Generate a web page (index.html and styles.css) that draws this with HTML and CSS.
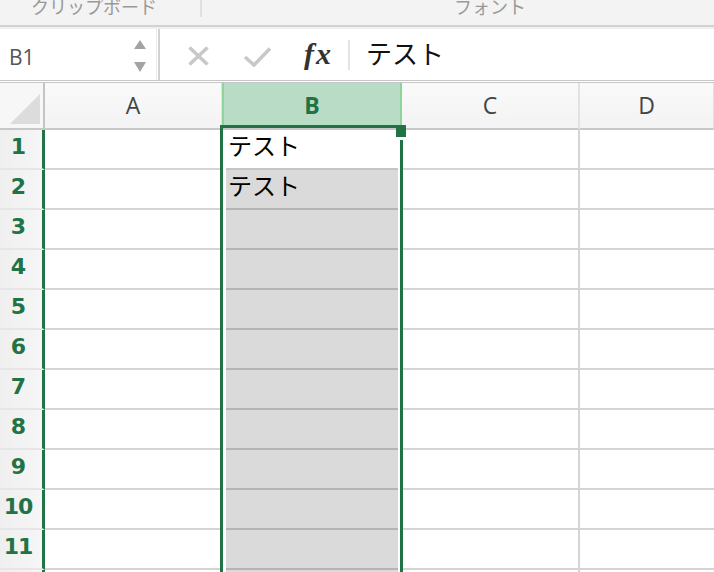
FILE: index.html
```html
<!DOCTYPE html>
<html lang="ja">
<head>
<meta charset="utf-8">
<title>Sheet</title>
<link rel="stylesheet" href="styles.css">
</head>
<body>
<div class="app">
  <div class="ribbon">
    <div class="rgroup g1"><span class="rlabel">クリップボード</span></div>
    <div class="rgroup g2"><span class="rlabel">フォント</span></div>
  </div>
  <div class="fbar">
    <div class="namebox">
      <span class="nbtext">B1</span>
      <svg class="spin" width="12" height="32" viewBox="0 0 12 32"><polygon points="6,0 12,9 0,9" fill="#a3a3a3"/><polygon points="0,22 12,22 6,32" fill="#a3a3a3"/></svg>
    </div>
    <div class="vsep"></div>
    <svg class="ico-x" width="23" height="22" viewBox="0 0 23 22"><path d="M2.5 2.5 L20.5 19.5 M20.5 2.5 L2.5 19.5" stroke="#c8c8c8" stroke-width="3.6" fill="none"/></svg>
    <svg class="ico-ok" width="29" height="21" viewBox="0 0 29 21"><path d="M2 11 L11 19 L27 2.5" stroke="#c8c8c8" stroke-width="3.6" fill="none" stroke-linejoin="miter"/></svg>
    <span class="fx">fx</span>
    <div class="fsep"></div>
    <span class="ftext">テスト</span>
  </div>
  <div class="sheet">
    <div class="corner"><svg width="45" height="45" viewBox="0 0 45 45"><polygon points="40,11 40,41 10,41" fill="#dcdcdc"/></svg></div>
    <div class="ch">A</div>
    <div class="ch sel">B</div>
    <div class="ch cc">C</div>
    <div class="ch">D</div>

    <div class="rh">1</div><div class="cell"></div><div class="cell b"><div class="bf active"><span class="txt">テスト</span></div></div><div class="cell c"></div><div class="cell"></div>
    <div class="rh">2</div><div class="cell"></div><div class="cell b"><div class="bf"><span class="txt">テスト</span></div></div><div class="cell c"></div><div class="cell"></div>
    <div class="rh">3</div><div class="cell"></div><div class="cell b"><div class="bf"></div></div><div class="cell c"></div><div class="cell"></div>
    <div class="rh">4</div><div class="cell"></div><div class="cell b"><div class="bf"></div></div><div class="cell c"></div><div class="cell"></div>
    <div class="rh">5</div><div class="cell"></div><div class="cell b"><div class="bf"></div></div><div class="cell c"></div><div class="cell"></div>
    <div class="rh">6</div><div class="cell"></div><div class="cell b"><div class="bf"></div></div><div class="cell c"></div><div class="cell"></div>
    <div class="rh">7</div><div class="cell"></div><div class="cell b"><div class="bf"></div></div><div class="cell c"></div><div class="cell"></div>
    <div class="rh">8</div><div class="cell"></div><div class="cell b"><div class="bf"></div></div><div class="cell c"></div><div class="cell"></div>
    <div class="rh">9</div><div class="cell"></div><div class="cell b"><div class="bf"></div></div><div class="cell c"></div><div class="cell"></div>
    <div class="rh">10</div><div class="cell"></div><div class="cell b"><div class="bf"></div></div><div class="cell c"></div><div class="cell"></div>
    <div class="rh">11</div><div class="cell"></div><div class="cell b"><div class="bf"></div></div><div class="cell c"></div><div class="cell"></div>
    <div class="rh"></div><div class="cell"></div><div class="cell b"><div class="bf"></div></div><div class="cell c"></div><div class="cell"></div>

    <div class="selbox"></div>
    <div class="handle"></div>
  </div>
</div>
</body>
</html>
```
FILE: styles.css
```css
* { box-sizing: border-box; }
html, body { margin: 0; padding: 0; }
body {
  width: 714px;
  height: 572px;
  overflow: hidden;
  background: #fff;
  font-family: "Open Sans", "DejaVu Sans", sans-serif;
}
.app { width: 714px; height: 572px; overflow: hidden; }

/* ribbon */
.ribbon {
  height: 27px;
  background: #f3f3f3;
  border-bottom: 2px solid #d2d2d2;
  display: flex;
  align-items: flex-start;
}
.rgroup { height: 17px; display: flex; align-items: flex-start; }
.g1 { width: 202px; border-right: 2px solid #e0e0e0; justify-content: center; padding-right: 12px; }
.g2 { flex: 1; padding-left: 252px; }
.rlabel {
  font-family: "Noto Sans CJK JP", sans-serif;
  font-size: 18px;
  line-height: 18px;
  margin-top: -3px;
  color: #999;
  white-space: nowrap;
}

/* formula bar */
.fbar {
  height: 56px;
  border-top: 2px solid #efefef;
  border-bottom: 3px double #c6c6c6;
  display: flex;
  align-items: center;
  background: #fff;
}
.namebox {
  width: 157px;
  height: 100%;
  border-right: 1px solid #ececec;
  display: flex;
  align-items: center;
  padding-left: 9px;
  padding-right: 10px;
}
.nbtext { font-size: 21px; color: #555; padding-top: 4px; }
.spin { margin-left: auto; margin-top: 2px; }
.vsep { width: 2px; height: 100%; background: #d2d2d2; margin-left: 1px; }
.ico-x { margin-left: 27px; margin-top: 2px; }
.ico-ok { margin-left: 33px; margin-top: 3px; }
.fx {
  margin-left: 32px;
  width: 30px;
  font-family: "Liberation Serif", serif;
  font-style: italic;
  font-weight: 700;
  font-size: 30px;
  letter-spacing: 2px;
  color: #333;
  line-height: 30px;
  margin-top: -2px;
}
.fsep { width: 2px; height: 30px; background: #e4e4e4; margin-left: 14px; }
.ftext {
  margin-left: 16px;
  font-family: "Noto Sans CJK JP", sans-serif;
  font-size: 26px;
  color: #111;
  line-height: 30px;
  margin-top: -3px;
}

/* sheet */
.sheet {
  position: relative;
  display: grid;
  grid-template-columns: 45px 177px 180px 178px 134px;
  grid-template-rows: 47px repeat(12, 40px);
}
.corner {
  background: #f7f7f7;
  border-right: 2px solid #c4c4c4;
  border-bottom: 2px solid #c8c8c8;
}
.corner svg { display: block; }
.ch {
  background: linear-gradient(#fafafa, #f3f3f3);
  border-bottom: 2px solid #c8c8c8;
  border-right: 1px solid #e2e2e2;
  display: flex;
  align-items: center;
  justify-content: center;
  font-size: 23px;
  color: #444;
  padding-bottom: 2px;
}
.ch.cc { border-right: 2px solid #e2e2e2; }
.ch.sel {
  background: #b9dcc6;
  border-left: 2px solid #8ed49b;
  border-right: 2px solid #8ed49b;
  color: #217346;
  font-weight: 700;
}
.rh {
  background: linear-gradient(to right, #efefef, #f6f6f6);
  border-right: 3px solid #217346;
  border-bottom: 2px solid #e6e6e6;
  font-family: "DejaVu Sans", sans-serif;
  font-weight: 700;
  font-size: 22px;
  line-height: 34px;
  color: #217346;
  text-align: center;
  padding-right: 6px;
  letter-spacing: -1px;
}
.cell { border-bottom: 2px solid #d4d4d4; }
.cell.c { border-right: 2px solid #d4d4d4; }
.cell.b { border-bottom: none; padding: 0 4px; }
.bf {
  height: 100%;
  background: #dadada;
  border-bottom: 2px solid #b4b4b4;
}
.bf.active { background: #fff; border-bottom-color: #c4c4c4; }
.txt {
  display: block;
  font-family: "Noto Sans CJK JP", sans-serif;
  font-size: 24px;
  line-height: 30px;
  color: #000;
  padding-left: 2px;
}
.selbox {
  position: absolute;
  left: 220px;
  top: 42px;
  width: 183px;
  height: 520px;
  border: 3px solid #217346;
  border-bottom: none;
}
.handle {
  position: absolute;
  left: 396px;
  top: 42px;
  width: 10px;
  height: 15px;
  background: #217346;
  border-bottom: 3px solid #fff;
}
```
